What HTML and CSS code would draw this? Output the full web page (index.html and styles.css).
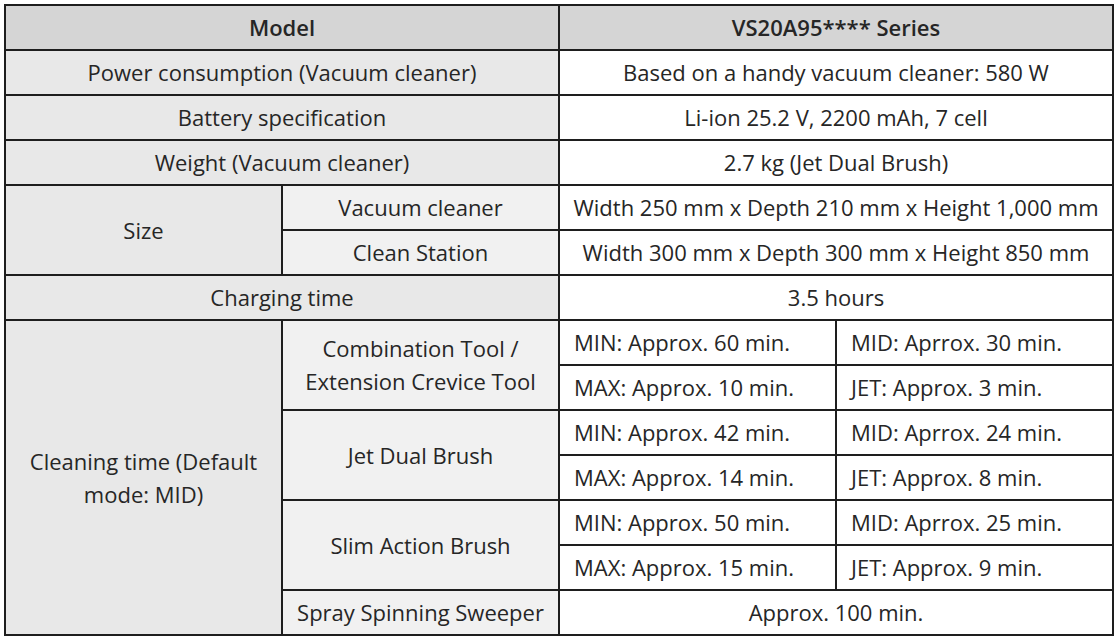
FILE: index.html
```html
<!DOCTYPE html>
<html>
<head>
<meta charset="utf-8">
<link rel="stylesheet" href="styles.css">
</head>
<body>
<div class="page">
<table class="spec">
  <colgroup><col class="c"><col class="c"><col class="c"><col class="c"></colgroup>
  <tr class="head"><th colspan="2">Model</th><th colspan="2">VS20A95**** Series</th></tr>
  <tr><td class="lbl" colspan="2">Power consumption (Vacuum cleaner)</td><td class="val" colspan="2">Based on a handy vacuum cleaner: 580 W</td></tr>
  <tr><td class="lbl" colspan="2">Battery specification</td><td class="val" colspan="2">Li-ion 25.2 V, 2200 mAh, 7 cell</td></tr>
  <tr><td class="lbl" colspan="2">Weight (Vacuum cleaner)</td><td class="val" colspan="2">2.7 kg (Jet Dual Brush)</td></tr>
  <tr><td class="lbl" rowspan="2">Size</td><td class="sub">Vacuum cleaner</td><td class="val" colspan="2">Width 250 mm x Depth 210 mm x Height 1,000 mm</td></tr>
  <tr><td class="sub">Clean Station</td><td class="val" colspan="2">Width 300 mm x Depth 300 mm x Height 850 mm</td></tr>
  <tr><td class="lbl" colspan="2">Charging time</td><td class="val" colspan="2">3.5 hours</td></tr>
  <tr><td class="lbl tall" rowspan="7">Cleaning time (Default mode: MID)</td><td class="sub tall" rowspan="2">Combination Tool / Extension Crevice Tool</td><td class="mode">MIN: Approx. 60 min.</td><td class="mode">MID: Aprrox. 30 min.</td></tr>
  <tr><td class="mode">MAX: Approx. 10 min.</td><td class="mode">JET: Approx. 3 min.</td></tr>
  <tr><td class="sub" rowspan="2">Jet Dual Brush</td><td class="mode">MIN: Approx. 42 min.</td><td class="mode">MID: Aprrox. 24 min.</td></tr>
  <tr><td class="mode">MAX: Approx. 14 min.</td><td class="mode">JET: Approx. 8 min.</td></tr>
  <tr><td class="sub" rowspan="2">Slim Action Brush</td><td class="mode">MIN: Approx. 50 min.</td><td class="mode">MID: Aprrox. 25 min.</td></tr>
  <tr><td class="mode">MAX: Approx. 15 min.</td><td class="mode">JET: Approx. 9 min.</td></tr>
  <tr><td class="sub">Spray Spinning Sweeper</td><td class="val" colspan="2">Approx. 100 min.</td></tr>
</table>
</div>
</body>
</html>
```
FILE: styles.css
```css
html, body {
  margin: 0;
  padding: 0;
  background: #ffffff;
}
.page {
  padding: 4px 0 0 4px;
}
.spec {
  border-collapse: collapse;
  table-layout: fixed;
  width: 1109px;
  font-family: "Open Sans", "Noto Sans", sans-serif;
  font-size: 22px;
  color: #262626;
  border: 2px solid #1e1e1e;
}
.spec .c {
  width: 277px;
}
.spec tr {
  height: 45px;
}
.spec th,
.spec td {
  border: 2px solid #1e1e1e;
  padding: 0 4px;
  text-align: center;
  vertical-align: middle;
  line-height: 33px;
  white-space: nowrap;
}
.spec th {
  background: #d5d5d5;
  font-weight: 600;
}
.spec .lbl {
  background: #e8e8e8;
}
.spec .sub {
  background: #f1f1f1;
}
.spec .tall {
  white-space: normal;
}
.spec .val {
  background: #ffffff;
}
.spec .mode {
  background: #ffffff;
  text-align: left;
  padding-left: 14px;
}
```
